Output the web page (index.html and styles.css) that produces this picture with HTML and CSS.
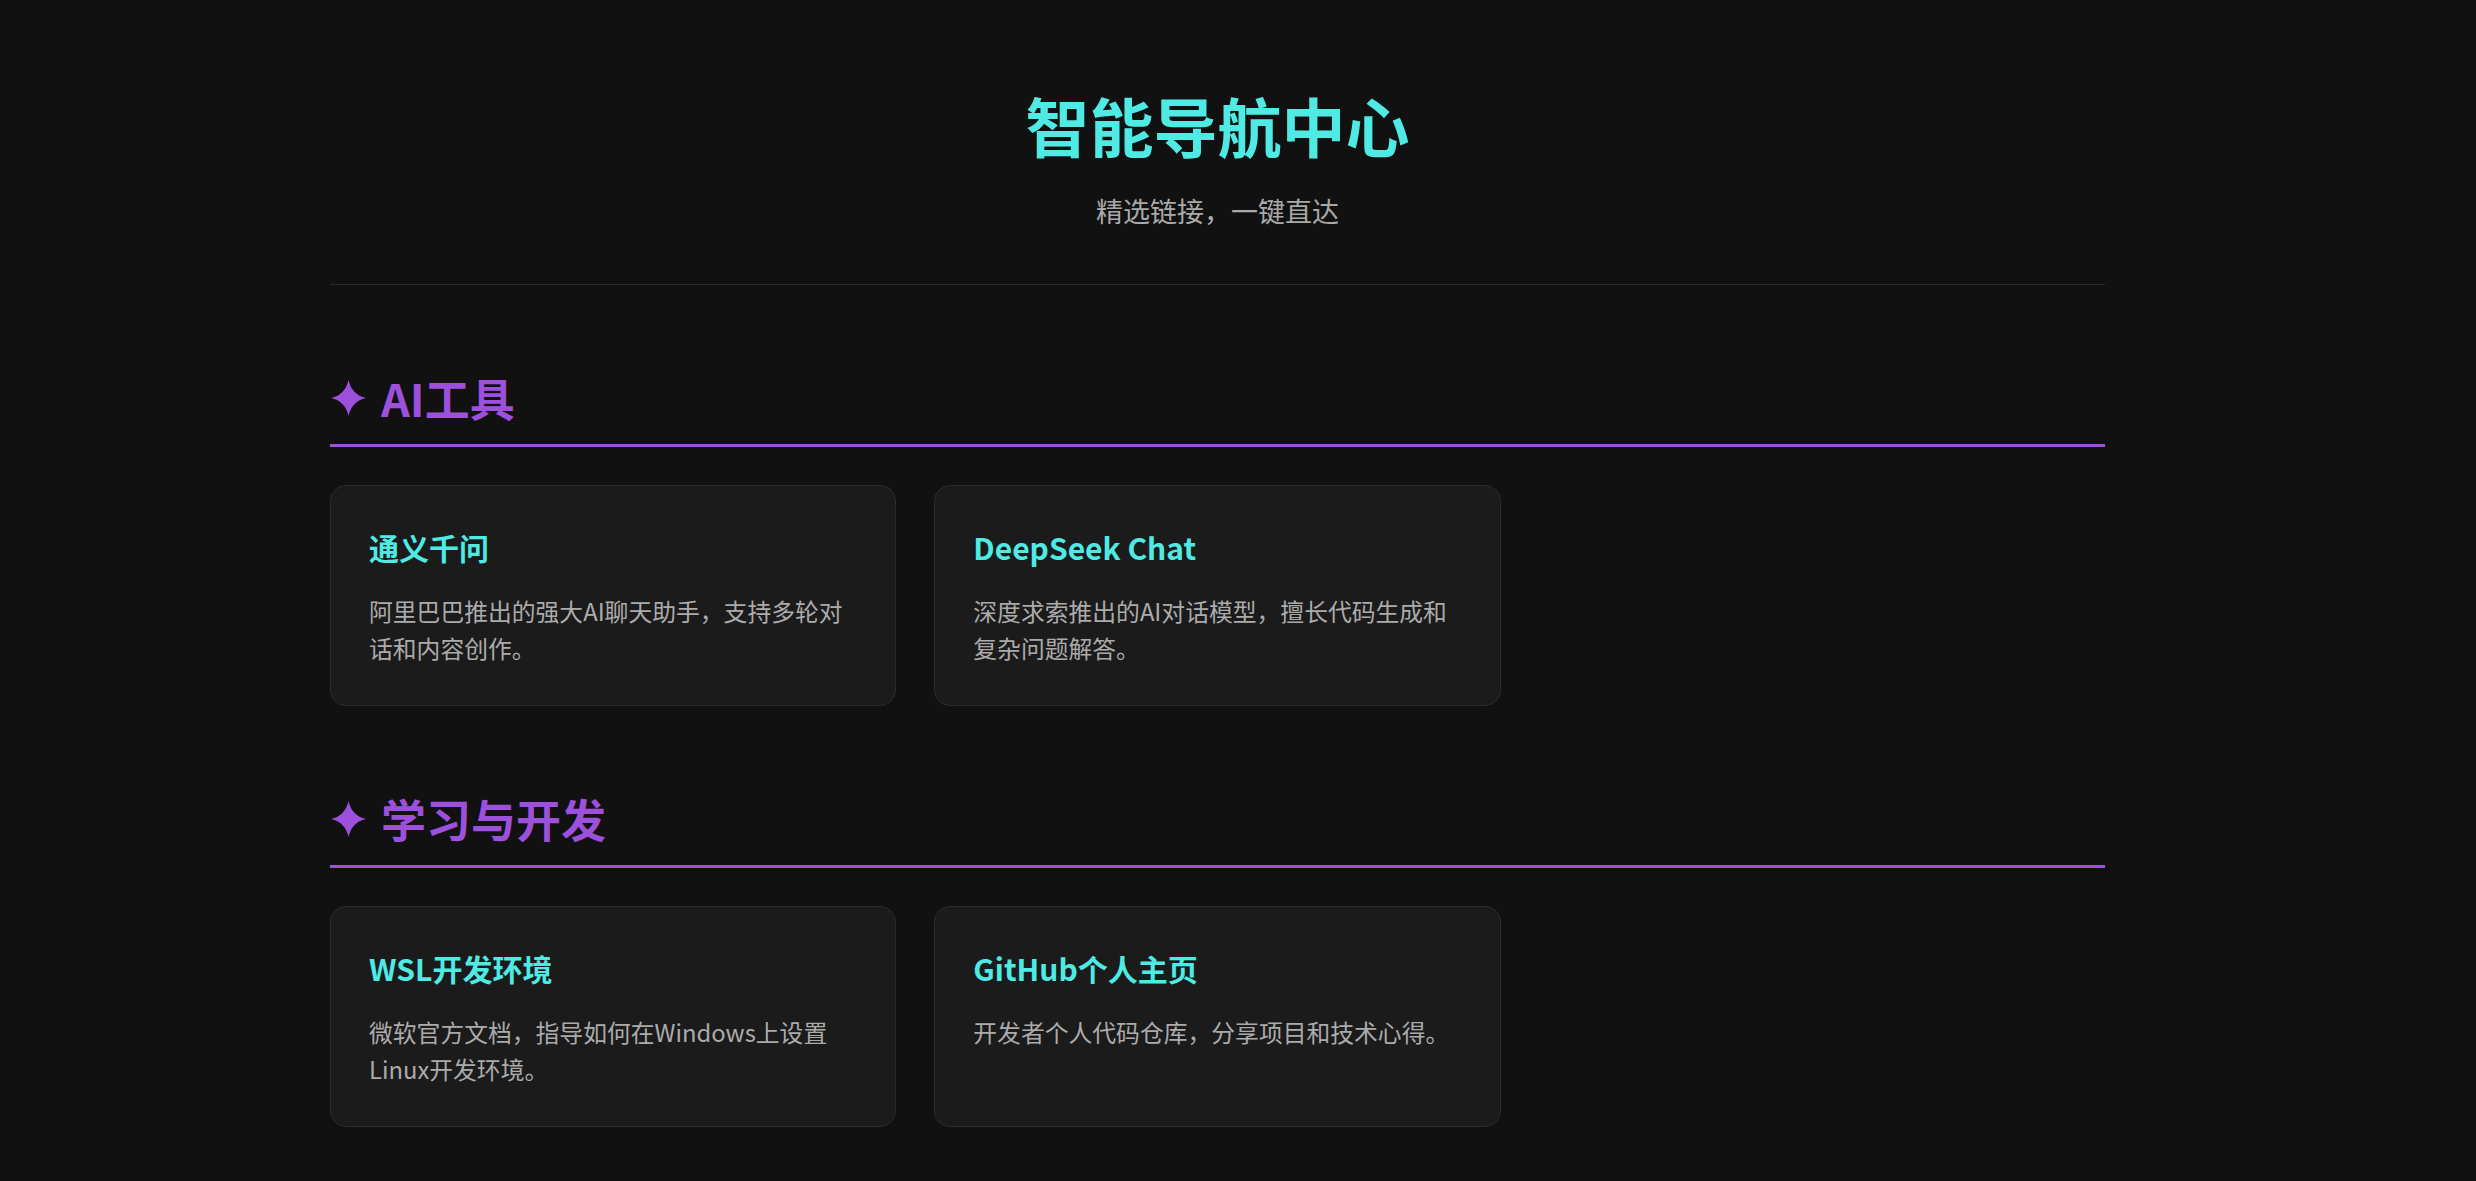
FILE: index.html
```html
<!DOCTYPE html>
<html lang="zh-CN">
<head>
<meta charset="utf-8">
<title>智能导航中心</title>
<link rel="stylesheet" href="styles.css">
</head>
<body>
<div class="page">
  <header class="hero">
    <h1 class="hero-title">智能导航中心</h1>
    <p class="hero-sub">精选链接，一键直达</p>
  </header>

  <section class="section">
    <h2 class="section-title">
      <svg class="star" viewBox="0 0 34 35" width="35" height="36"><path d="M17 0 Q20.2 14.3 34 17.5 Q20.2 20.7 17 35 Q13.8 20.7 0 17.5 Q13.8 14.3 17 0Z"/></svg>
      <span>AI工具</span>
    </h2>
    <div class="grid">
      <a class="card">
        <h3 class="card-title">通义千问</h3>
        <p class="card-desc">阿里巴巴推出的强大AI聊天助手，支持多轮对话和内容创作。</p>
      </a>
      <a class="card">
        <h3 class="card-title">DeepSeek Chat</h3>
        <p class="card-desc">深度求索推出的AI对话模型，擅长代码生成和复杂问题解答。</p>
      </a>
    </div>
  </section>

  <section class="section">
    <h2 class="section-title">
      <svg class="star" viewBox="0 0 34 35" width="35" height="36"><path d="M17 0 Q20.2 14.3 34 17.5 Q20.2 20.7 17 35 Q13.8 20.7 0 17.5 Q13.8 14.3 17 0Z"/></svg>
      <span>学习与开发</span>
    </h2>
    <div class="grid">
      <a class="card">
        <h3 class="card-title">WSL开发环境</h3>
        <p class="card-desc">微软官方文档，指导如何在Windows上设置Linux开发环境。</p>
      </a>
      <a class="card">
        <h3 class="card-title">GitHub个人主页</h3>
        <p class="card-desc">开发者个人代码仓库，分享项目和技术心得。</p>
      </a>
    </div>
  </section>
</div>
</body>
</html>
```

FILE: styles.css
```css
* { box-sizing: border-box; }

html, body {
  margin: 0;
  padding: 0;
  background: #111111;
}

body {
  font-family: "Noto Sans CJK SC", "Noto Sans", sans-serif;
  color: #ababab;
}

.page {
  width: 1775px;
  margin-left: 330px;
  padding: 86px 0 30px;
}

.hero {
  text-align: center;
  border-bottom: 1px solid #2a2a2a;
  padding-bottom: 53px;
}

.hero-title {
  margin: 0;
  font-size: 64px;
  line-height: 76.8px;
  font-weight: 700;
  color: #4eeae3;
}

.hero-sub {
  margin: 28px 0 0;
  font-size: 27px;
  line-height: 40.5px;
  color: #a9a9a9;
}

.section {
  margin-top: 84px;
}

.section-title {
  display: flex;
  align-items: center;
  gap: 15px;
  margin: 0;
  padding: 0 0 18px 1px;
  font-size: 45px;
  line-height: 57px;
  font-weight: 700;
  color: #9c50dc;
  border-bottom: 3px solid #9c50dc;
}

.star {
  display: block;
  fill: #9c50dc;
  flex: none;
}

.grid {
  display: grid;
  grid-template-columns: repeat(3, 1fr);
  gap: 38px;
  margin-top: 38px;
}

.card {
  display: block;
  min-height: 221px;
  background: #1b1b1b;
  border: 1px solid #2c2c2c;
  border-radius: 16px;
  padding: 41px 38px 36px;
  text-decoration: none;
}

.card-title {
  margin: 0;
  font-size: 30px;
  line-height: 40px;
  font-weight: 700;
  color: #4eeae3;
}

.card-desc {
  margin: 25px 0 0;
  font-size: 23.8px;
  line-height: 37px;
  color: #ababab;
}
```
